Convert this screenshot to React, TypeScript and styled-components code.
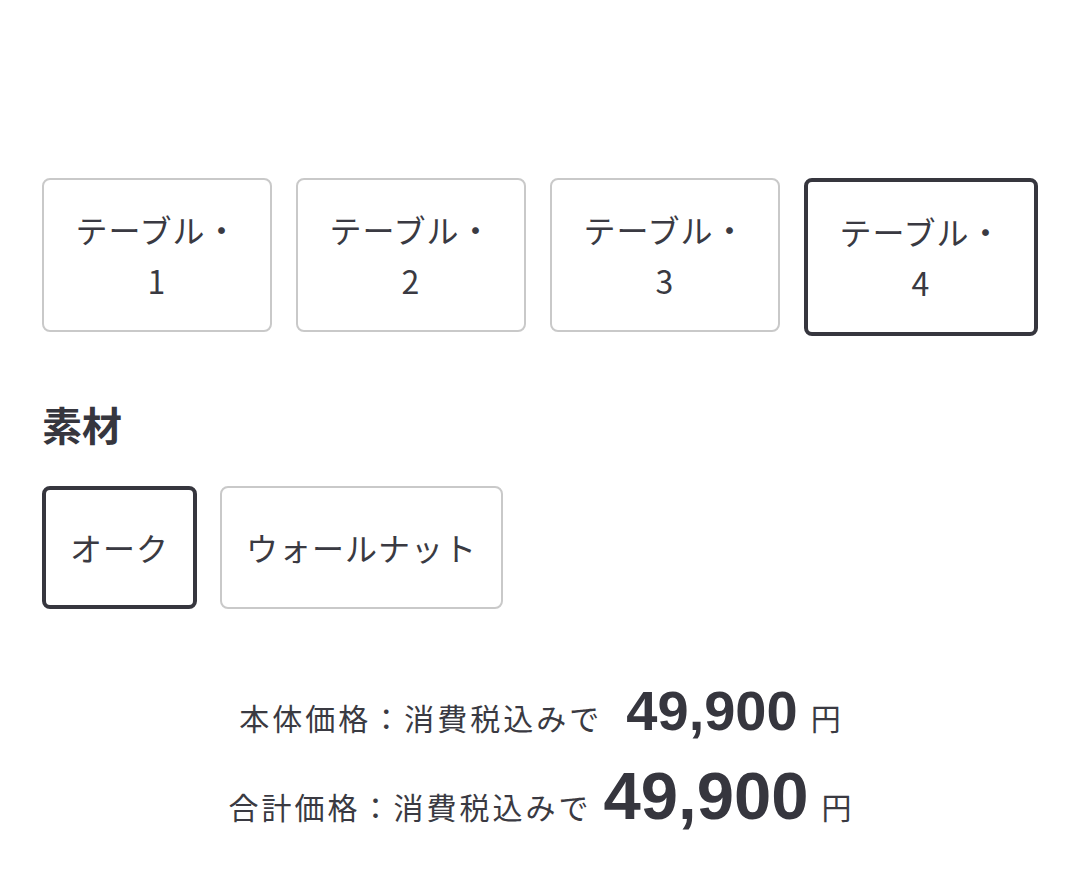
import styled, { createGlobalStyle } from 'styled-components'

const GlobalStyle = createGlobalStyle`
  body {
    margin: 0;
    background: #fff;
    color: #3a3a42;
    font-family: 'Noto Sans CJK JP', 'Noto Sans', sans-serif;
  }
`

const tables = ['1', '2', '3', '4']
const materials = ['オーク', 'ウォールナット']

export default function App() {
  const selectedTable = '4'
  const selectedMaterial = 'オーク'

  return (
    <>
      <GlobalStyle />
      <Wrapper>
        <TableList>
          {tables.map((n) => (
            <TableButton key={n} $active={n === selectedTable}>
              テーブル・
              <br />
              {n}
            </TableButton>
          ))}
        </TableList>

        <Heading>素材</Heading>
        <MaterialList>
          {materials.map((m) => (
            <MaterialButton key={m} $active={m === selectedMaterial}>
              {m}
            </MaterialButton>
          ))}
        </MaterialList>

        <Prices>
          <PriceRow>
            <PriceLabel>本体価格：消費税込みで</PriceLabel>
            <Amount $size={56} $gap={24}>
              49,900
            </Amount>
            <Yen>円</Yen>
          </PriceRow>
          <PriceRow>
            <PriceLabel>合計価格：消費税込みで</PriceLabel>
            <Amount $size={67} $gap={12}>
              49,900
            </Amount>
            <Yen>円</Yen>
          </PriceRow>
        </Prices>
      </Wrapper>
    </>
  )
}

const Wrapper = styled.div`
  padding: 178px 42px 0;
`

const TableList = styled.div`
  display: flex;
  align-items: flex-start;
  gap: 24px;
`

const TableButton = styled.div<{ $active: boolean }>`
  width: 178px;
  padding: 24px 26px;
  border: ${(p) => (p.$active ? '4px solid #36363e' : '2px solid #c9c9c9')};
  border-radius: 8px;
  font-size: 32px;
  line-height: 51px;
  letter-spacing: 1px;
  text-align: center;
  color: #3a3a42;
`

const Heading = styled.h2`
  margin: 60px 0 0;
  font-size: 40px;
  line-height: 56px;
  font-weight: bold;
  color: #36363e;
`

const MaterialList = styled.div`
  display: flex;
  gap: 23px;
  margin-top: 34px;
`

const MaterialButton = styled.div<{ $active: boolean }>`
  padding: 32px 24px;
  border: ${(p) => (p.$active ? '4px solid #36363e' : '2px solid #c9c9c9')};
  border-radius: 8px;
  font-size: 32px;
  line-height: 51px;
  letter-spacing: 1px;
  color: #3a3a42;
  display: flex;
  align-items: center;
`

const Prices = styled.div`
  margin-top: 68px;
  display: flex;
  flex-direction: column;
  align-items: center;
  gap: 12px;
`

const PriceRow = styled.div`
  display: flex;
  align-items: baseline;
  line-height: 1.2;
`

const PriceLabel = styled.span`
  font-size: 30px;
  letter-spacing: 3px;
  color: #3a3a42;
`

const Amount = styled.span<{ $size: number; $gap: number }>`
  margin-left: ${(p) => p.$gap}px;
  font-family: 'Liberation Sans', Arial, sans-serif;
  font-size: ${(p) => p.$size}px;
  font-weight: bold;
  color: #36363e;
`

const Yen = styled.span`
  margin-left: 13px;
  font-size: 30px;
  color: #3a3a42;
`
